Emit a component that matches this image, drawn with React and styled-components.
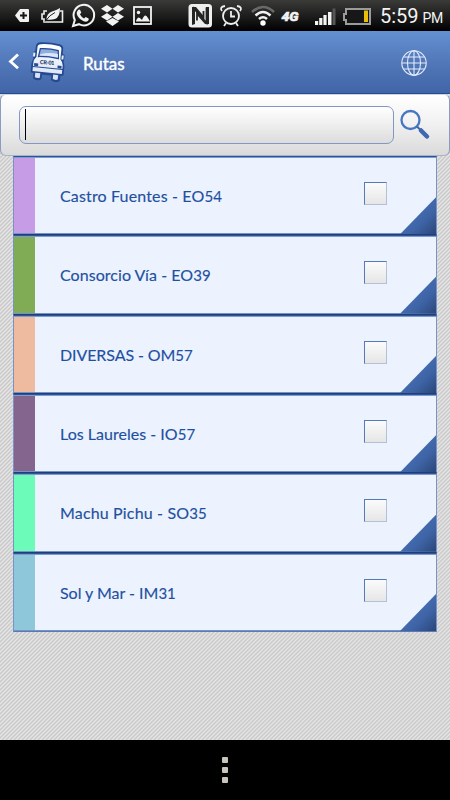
import React from "react";
import styled, { createGlobalStyle } from "styled-components";

const GlobalStyle = createGlobalStyle`
  * { box-sizing: border-box; }
  body { margin: 0; background: #000; }
`;

const Screen = styled.div`
  width: 450px;
  height: 800px;
  display: flex;
  flex-direction: column;
  overflow: hidden;
  font-family: Lato, "Open Sans", sans-serif;
  background: #000;
`;

const StatusBar = styled.div`
  height: 31px;
  flex: none;
  display: flex;
  background: linear-gradient(#3a3a38, #1b1b1b 55%, #000);
`;

const StatusIcons = styled.svg`
  display: block;
  width: 375px;
  height: 31px;
  flex: none;
`;

const Clock = styled.div`
  display: flex;
  align-items: baseline;
  padding: 4px 0 0 5px;
  color: #f4f4f4;
  font-family: Roboto, sans-serif;
  font-size: 20px;
  line-height: 24px;
  white-space: nowrap;
`;

const Meridiem = styled.span`
  font-size: 14px;
  margin-left: 4px;
  letter-spacing: -0.5px;
`;

const Header = styled.header`
  height: 63px;
  flex: none;
  display: flex;
  align-items: center;
  background: linear-gradient(#6390d2, #5278b9 50%, #4165a7);
  border-bottom: 1px solid #204f98;
`;

const HeaderArt = styled.svg`
  display: block;
  width: 83px;
  height: 62px;
`;

const Title = styled.h1`
  flex: 1;
  margin: 3px 0 0;
  color: #fff;
  font-size: 17px;
  font-weight: 400;
  line-height: 20px;
  -webkit-text-stroke: 0.4px #fff;
`;

const Globe = styled.svg`
  display: block;
  width: 28px;
  height: 28px;
  margin: 1px 22px 0 0;
`;

const Body = styled.main`
  height: 646px;
  flex: none;
  background: repeating-linear-gradient(135deg, #c8c8c8 0, #e6e6e6 1.414px, #c8c8c8 2.828px);
`;

const SearchPanel = styled.div`
  height: 62px;
  display: flex;
  padding: 11px 0 0 18px;
  border: 1px solid;
  border-color: #cfd4e1 #8b9cc4 #a8b2c9;
  border-radius: 6px;
  background: linear-gradient(#fff, #f0f0f0 50%, #dadada);
`;

const SearchField = styled.div`
  width: 375px;
  height: 38px;
  padding: 2px 5px;
  border: 1px solid #8297c3;
  border-radius: 7px;
  background: linear-gradient(#fff, #f0f0f0 45%, #dcdcdc);
`;

const Caret = styled.div`
  width: 1px;
  height: 31px;
  background: #000;
`;

const SearchIcon = styled.svg`
  display: block;
  width: 32px;
  height: 34px;
  margin: 2px 0 0 6px;
`;

const List = styled.ul`
  list-style: none;
  margin: 0 13px;
  padding: 0;
  height: 476px;
  display: grid;
  grid-template-rows: repeat(6, 1fr);
`;

const Row = styled.li`
  display: grid;
  grid-template-columns: 21px 1fr 23px 13px 36px;
  border: 1px solid #7893c8;
  border-top: 1px solid #2c559d;
  border-bottom-color: ${(p) => (p.$last ? "#5c78b5" : "#213f75")};
  box-shadow: inset 0 1px #7e9bce, inset 0 -1px #7693c6;
  background: #ecf3ff;
`;

const Stripe = styled.div`
  background: ${(p) => p.$color};
  margin: 1px 0;
`;

const Label = styled.div`
  padding: 29px 0 0 25px;
  color: #1f50a0;
  font-size: 16px;
  line-height: 20px;
  white-space: nowrap;
  letter-spacing: ${(p) => p.$spacing}px;
  -webkit-text-stroke: 0.15px #1f50a0;
`;

const Digits = styled.span`
  font-size: 15px;
`;

const Checkbox = styled.div`
  width: 23px;
  height: 23px;
  margin-top: 25px;
  border: 1px solid #b4c0d9;
  border-top-color: #537abb;
  border-left-color: #537abb;
  background: linear-gradient(#fbfbfb, #e6e6e6);
`;

const Corner = styled.div`
  grid-column: 5;
  align-self: end;
  height: 37px;
  background: linear-gradient(135deg, #456bb0 45%, #3e64a6 65%, #2b4678);
  clip-path: polygon(100% 0, 100% 100%, 0 100%);
`;

const NavBar = styled.nav`
  flex: 1;
  display: flex;
  flex-direction: column;
  align-items: center;
  justify-content: center;
  gap: 4px;
`;

const MenuDot = styled.span`
  width: 6px;
  height: 6px;
  border-radius: 1px;
  background: #c9c4bd;
`;

const routes = [
  { name: "Castro Fuentes - EO", number: "54", color: "#c69ce7", spacing: 0.15 },
  { name: "Consorcio Vía - EO", number: "39", color: "#7fac55", spacing: 0.05 },
  { name: "DIVERSAS - OM", number: "57", color: "#eebaa0", spacing: -0.09 },
  { name: "Los Laureles - IO", number: "57", color: "#84658d", spacing: 0.02 },
  { name: "Machu Pichu - SO", number: "35", color: "#6dfbb9", spacing: 0.16 },
  { name: "Sol y Mar - IM", number: "31", color: "#8fc7da", spacing: -0.02 },
];

function StatusArt() {
  return (
    <StatusIcons viewBox="0 0 375 31" fill="none">
      <path d="M15 15.500 20 9h8q1 0 1 1v11q0 1-1 1h-8z" fill="#f2f2f2" />
      <path d="M20 15.500h7M23.500 12v7" stroke="#161616" strokeWidth="2" />
      <path d="M47 11h-3v3h-2v5h2v3h18.500V11H60" stroke="#eee" strokeWidth="1.600" />
      <path d="M46.500 19.500q0-6 5.500-8 4.500-1.500 8-3.500 0 9-5 11-4 1.200-8.500.5z" fill="#f2f2f2" />
      <path d="M45 21.500q5-7 10-9" stroke="#222" strokeWidth="1" />
      <path d="M73 26l1.800-6A10.300 10.300 0 1 1 79 24.200z" stroke="#f2f2f2" strokeWidth="2" />
      <path d="M78 10.200c1-1 2-.7 2.400.3l.9 2.300-1.400 1.500q1.400 2.800 4.200 4.200l1.500-1.500 2.700 1.200c.7.400.6 2-.5 2.800-1.700 1.200-3.800.8-6.600-1.300-3.600-2.700-6.100-6.500-3.200-9.500z" fill="#f2f2f2" />
      <path d="M107 5l5.500 3.800-5.500 3.800-6-3.800zM118 5l6 3.800-6 3.800-5.500-3.800zM107 13l5.500 3.800-5.500 3.800-6-3.800zM118 13l6 3.800-6 3.800-5.500-3.800zM106 21.500l6.500-3.600 6.500 3.600-6.500 4.500z" fill="#f2f2f2" />
      <rect x="134" y="7" width="17" height="17" stroke="#f2f2f2" strokeWidth="1.800" />
      <path d="M136 21q2-6 5-2l1 1q3-8 6-2l2 3.500h-14z" fill="#f2f2f2" />
      <circle cx="138.500" cy="12.500" r="1.700" fill="#f2f2f2" />
      <rect x="188.500" y="4" width="23.500" height="23.500" rx="3.500" fill="#eee" />
      <path d="M194 24V8.500L203.500 18V11" stroke="#242424" strokeWidth="1.800" />
      <path d="M197 20.500V13l9.500 10V7.500" stroke="#242424" strokeWidth="1.800" />
      <path d="M192 7h4l8 9.500V20l-9-9v13l-3 1zM209 24h-4l-8-9v-3l9 9V7h3z" fill="#242424" />
      <circle cx="231" cy="16" r="8" stroke="#eee" strokeWidth="1.800" />
      <path d="M231 11v5.500h4M226 23l-2 3M236 23l2 3" stroke="#eee" strokeWidth="1.800" />
      <path d="M222 11q-3-4 3-5M240 11q3-4-3-5" stroke="#eee" strokeWidth="1.800" />
      <path d="M252 12q11-10 22 0" stroke="#696969" strokeWidth="2.600" />
      <path d="M255.500 15.500q7.500-7 15 0M259 19q4-3.600 8 0" stroke="#f2f2f2" strokeWidth="2.500" />
      <circle cx="263" cy="23" r="2.700" fill="#fff" />
      <text x="281.500" y="20.500" fill="#f2f2f2" stroke="#f2f2f2" strokeWidth=".6" fontFamily="Roboto, sans-serif" fontSize="13.500" fontWeight="900" fontStyle="italic" textLength="17" lengthAdjust="spacingAndGlyphs">4G</text>
      <path d="M315 21h3.200v4H315zM319.200 18h3.200v7h-3.200zM323.400 15h3.200v10h-3.200zM328 12h3.500v13H328z" fill="#f4f4f4" />
      <path d="M332.500 8.500h3v16.500h-3z" fill="#565656" />
      <path d="M346 9h24v15h-24v-4h-2v-6h2z" fill="#171717" stroke="#9b9b9b" strokeWidth="2" />
      <path d="M364 10.500h4V22h-4z" fill="#eabd09" />
    </StatusIcons>
  );
}

function BusArt() {
  return (
    <HeaderArt viewBox="0 0 83 62" fill="none">
      <defs>
        <linearGradient id="bus" x1="0" y1="0" x2="0" y2="1">
          <stop stopColor="#fff" />
          <stop offset="1" stopColor="#d6e0f6" />
        </linearGradient>
      </defs>
      <path d="M18 23.500 10.500 30.500l7.500 6.700" stroke="#fff" strokeWidth="2.800" />
      <g transform="rotate(6 48 31)">
        <path d="M35.500 17q0-3 3-3.500 10-1.500 19 0 3 .5 3 3.500v6h2v5l-1 1q2 2 2 5v8h-3v6q-3 2-6.500 0v-5H42v5q-3 2-6 0v-6h-3v-8q0-3 2-5l-1-1v-5h1.500z" stroke="#234a92" strokeWidth="2.600" strokeLinejoin="round" fill="#234a92" />
        <path d="M36 17q0-2.500 3-3 9-1.500 18 0 3 .5 3 3v10q3 3 3 6v3.500H33.500V33q0-3 2.500-6zM33.500 37.500H63v4H33.500zM36.500 43h5v4.500q-2.500 1-5 0zM54.500 43h5v4.500q-2.500 1-5 0z" fill="url(#bus)" />
        <path d="M39 18.500q9-1.500 18 0l1 8q-10-1.200-20 0z" fill="#8fadde" stroke="#234a92" strokeWidth="1.300" />
        <path d="M39.500 24q8-3 17.500-2l.5 3.500q-9-1-18.500 0z" fill="#dce7fa" />
        <path d="M33.500 23v4M62 23v4" stroke="#e7eefc" strokeWidth="2" />
        <path d="M34.500 33.500h4v2.700h-4zM58 33.500h4v2.700h-4z" fill="#234b91" />
      </g>
      <text x="40" y="33.500" fill="#173064" fontFamily="Lato, sans-serif" fontWeight="900" fontSize="5.500" textLength="14.500" transform="rotate(4 47 31)">CR-01</text>
    </HeaderArt>
  );
}

export default function App() {
  return (
    <>
      <GlobalStyle />
      <Screen>
        <StatusBar>
          <StatusArt />
          <Clock>5:59<Meridiem>PM</Meridiem></Clock>
        </StatusBar>
        <Header>
          <BusArt />
          <Title>Rutas</Title>
          <Globe viewBox="0 0 28 28" fill="none" stroke="#e4ecfb" strokeWidth="1.100">
            <circle cx="14" cy="14" r="12.200" />
            <ellipse cx="14" cy="14" rx="6.500" ry="12.200" />
            <path d="M14 1.800v24.400M1.800 14h24.400M4 8h20M4 20h20" />
          </Globe>
        </Header>
        <Body>
          <SearchPanel>
            <SearchField><Caret /></SearchField>
            <SearchIcon viewBox="0 0 32 34" fill="none">
              <circle cx="10.500" cy="12" r="9" stroke="#4677c0" strokeWidth="2.300" />
              <path d="M17 18.500l4 4" stroke="#3d68b0" strokeWidth="2" />
              <path d="M21 22.500l6 6" stroke="#3d68b0" strokeWidth="4.500" strokeLinecap="round" />
            </SearchIcon>
          </SearchPanel>
          <List>
            {routes.map((r, i) => (
              <Row key={r.name} $last={i === routes.length - 1}>
                <Stripe $color={r.color} />
                <Label $spacing={r.spacing}>{r.name}<Digits>{r.number}</Digits></Label>
                <Checkbox />
                <Corner />
              </Row>
            ))}
          </List>
        </Body>
        <NavBar><MenuDot /><MenuDot /><MenuDot /></NavBar>
      </Screen>
    </>
  );
}
